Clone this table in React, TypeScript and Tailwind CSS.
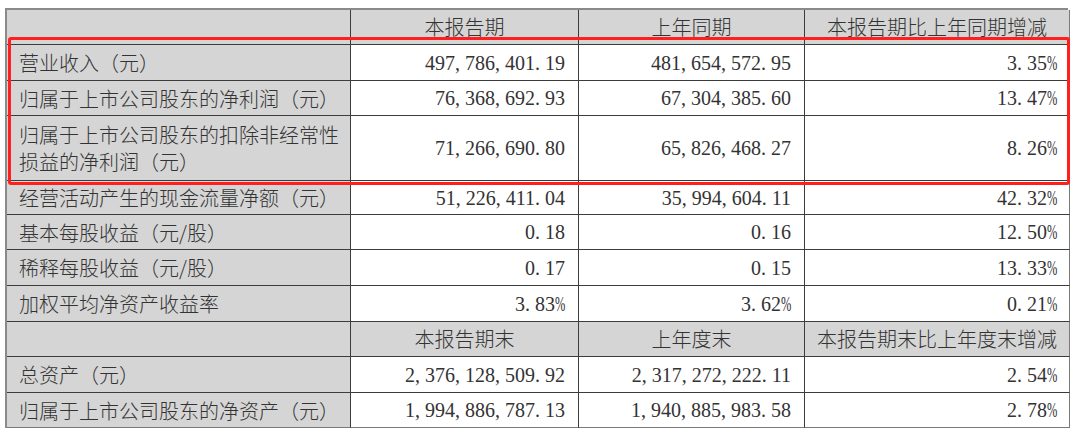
import React from "react";

const cjk = { fontFamily: '"Noto Sans CJK SC", "Noto Sans", sans-serif' };
const num = { fontFamily: '"Liberation Serif", "Noto Sans CJK SC", serif' };

function Num({ v }: { v: string }) {
  return (
    <span style={num} className="whitespace-nowrap">
      {v.split("").map((c, i) => {
        if (c === "," || c === ".")
          return (
            <span key={i} className="inline-block w-[0.5em] text-left">
              {c}
            </span>
          );
        if (c === "%")
          return (
            <span key={i} className="inline-block w-[0.5em] origin-left scale-x-[0.62] text-left">
              %
            </span>
          );
        return <span key={i}>{c}</span>;
      })}
    </span>
  );
}

type Row = { label: React.ReactNode; a: string; b: string; c: string; h: string };

const rows1: Row[] = [
  { label: "营业收入（元）", a: "497,786,401.19", b: "481,654,572.95", c: "3.35%", h: "h-[36px]" },
  { label: "归属于上市公司股东的净利润（元）", a: "76,368,692.93", b: "67,304,385.60", c: "13.47%", h: "h-[35px]" },
  {
    label: (
      <>
        归属于上市公司股东的扣除非经常性
        <br />
        损益的净利润（元）
      </>
    ),
    a: "71,266,690.80",
    b: "65,826,468.27",
    c: "8.26%",
    h: "h-[65px]",
  },
  { label: "经营活动产生的现金流量净额（元）", a: "51,226,411.04", b: "35,994,604.11", c: "42.32%", h: "h-[34px]" },
  { label: "基本每股收益（元/股）", a: "0.18", b: "0.16", c: "12.50%", h: "h-[35px]" },
  { label: "稀释每股收益（元/股）", a: "0.17", b: "0.15", c: "13.33%", h: "h-[36px]" },
  { label: "加权平均净资产收益率", a: "3.83%", b: "3.62%", c: "0.21%", h: "h-[36px]" },
];

const rows2: Row[] = [
  { label: "总资产（元）", a: "2,376,128,509.92", b: "2,317,272,222.11", c: "2.54%", h: "h-[36px]" },
  { label: "归属于上市公司股东的净资产（元）", a: "1,994,886,787.13", b: "1,940,885,983.58", c: "2.78%", h: "h-[35px]" },
];

const cellBase = "border-r border-b border-[#3c3c3c] flex items-center";

function Header({ cols, h }: { cols: string[]; h: string }) {
  return (
    <>
      <div className={`${cellBase} ${h} bg-[#d5d5d5]`} />
      {cols.map((c, i) => (
        <div
          key={i}
          style={cjk}
          className={`${cellBase} ${h} bg-[#d5d5d5] justify-center font-light ${i === 2 ? "border-r-[#7a7a7a]" : ""}`}
        >
          {c}
        </div>
      ))}
    </>
  );
}

function DataRow({ r, last }: { r: Row; last?: boolean }) {
  const lb = last ? "border-b-[#7a7a7a]" : "";
  return (
    <>
      <div style={cjk} className={`${cellBase} ${r.h} ${lb} bg-[#d5d5d5] pl-[12px] leading-[27px] font-light`}>
        <div>{r.label}</div>
      </div>
      <div className={`${cellBase} ${r.h} ${lb} bg-white justify-end pr-[13px]`}>
        <Num v={r.a} />
      </div>
      <div className={`${cellBase} ${r.h} ${lb} bg-white justify-end pr-[13px]`}>
        <Num v={r.b} />
      </div>
      <div className={`${cellBase} ${r.h} ${lb} bg-white justify-end pr-[12px] border-r-[#7a7a7a]`}>
        <Num v={r.c} />
      </div>
    </>
  );
}

export default function App() {
  return (
    <div className="relative w-[1080px] h-[437px] bg-white overflow-hidden">
      <div className="pl-[5px] pt-[8px]">
        <div className="grid grid-cols-[344px_228px_226px_265px] w-[1063px] border-l-2 border-t-2 border-[#8a8a8a] text-[20px] text-[#333333]">
          <Header cols={["本报告期", "上年同期", "本报告期比上年同期增减"]} h="h-[35px]" />
          {rows1.map((r, i) => (
            <DataRow key={i} r={r} />
          ))}
          <Header cols={["本报告期末", "上年度末", "本报告期末比上年度末增减"]} h="h-[35px]" />
          {rows2.map((r, i) => (
            <DataRow key={i} r={r} last={i === rows2.length - 1} />
          ))}
        </div>
      </div>
      <div className="absolute left-[8px] top-[37px] w-[1062px] h-[148px] border-[3px] border-[#ff1f1f] rounded-[3px] pointer-events-none" />
    </div>
  );
}
